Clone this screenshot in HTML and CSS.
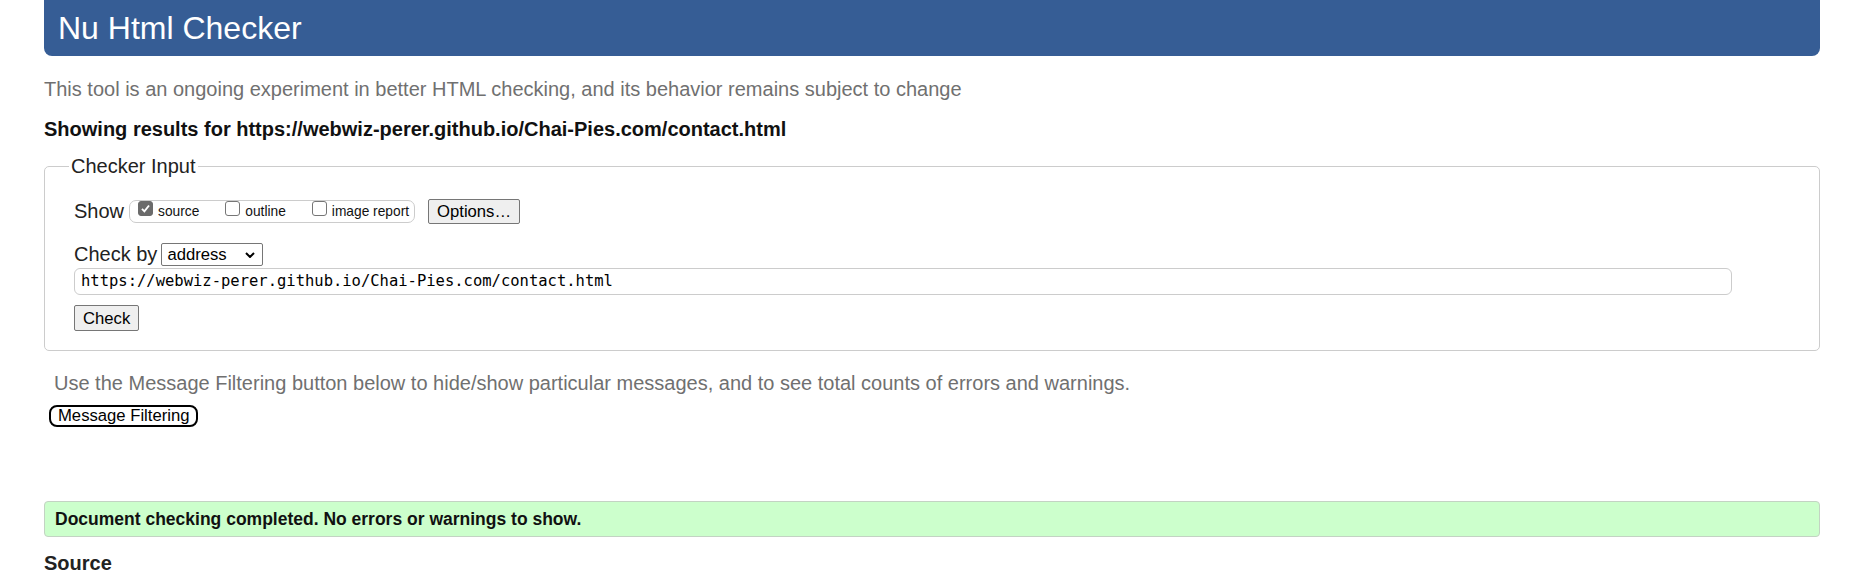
FILE: index.html
```html
<!DOCTYPE html>
<html lang="en">
<head>
<meta charset="utf-8">
<title>Showing results for contact.html - Nu Html Checker</title>
<link rel="stylesheet" href="styles.css">
</head>
<body>
<h1 class="title">Nu Html Checker</h1>
<p class="about">This tool is an ongoing experiment in better HTML checking, and its behavior remains subject to change</p>
<p class="results">Showing results for https://webwiz-perer.github.io/Chai-Pies.com/contact.html</p>
<fieldset class="checker">
  <legend class="legend">Checker Input</legend>
  <div class="fields">
    <div class="row show-row">
      <span class="label">Show</span>
      <span class="options-group">
        <span class="opt"><span class="box checked"><svg viewBox="0 0 14 14" width="14" height="14"><path d="M3.2 7.4 L5.8 10 L10.8 3.8" fill="none" stroke="#fff" stroke-width="2"/></svg></span><span class="opt-label">source</span></span>
        <span class="opt"><span class="box"></span><span class="opt-label">outline</span></span>
        <span class="opt"><span class="box"></span><span class="opt-label">image report</span></span>
      </span>
      <button class="btn options-btn" type="button">Options…</button>
    </div>
    <div class="row checkby-row">
      <span class="label">Check by</span>
      <span class="select">
        <span class="select-text">address</span>
        <svg class="chev" viewBox="0 0 10 6" width="10" height="6"><path d="M1 1 L5 5 L9 1" fill="none" stroke="#000" stroke-width="2"/></svg>
      </span>
    </div>
    <div class="url">https://webwiz-perer.github.io/Chai-Pies.com/contact.html</div>
    <button class="btn check-btn" type="button">Check</button>
  </div>
</fieldset>
<p class="filter-note">Use the Message Filtering button below to hide/show particular messages, and to see total counts of errors and warnings.</p>
<button class="filter-btn" type="button">Message Filtering</button>
<div class="success">Document checking completed. No errors or warnings to show.</div>
<h2 class="source">Source</h2>
</body>
</html>
```
FILE: styles.css
```css
html { background: #fff; }
body {
  margin: 0;
  padding: 0 45px 0 44px;
  font-family: "Liberation Sans", Arial, sans-serif;
  font-size: 20px;
  line-height: 23px;
  color: #000;
}
.title {
  margin: 0;
  height: 56px;
  line-height: 56px;
  padding: 0 14px;
  font-size: 32px;
  font-weight: normal;
  background: #365d95;
  color: #fff;
  border-radius: 0 0 8px 8px;
}
.about {
  margin: 22px 0 0;
  color: #707070;
}
.results {
  margin: 17px 0 0;
  font-weight: bold;
  color: #111;
}
.checker {
  margin: 14px 0 0;
  border: 1px solid #cccccc;
  border-radius: 5px;
  padding: 21px 24px 19px 24px;
}
.legend {
  padding: 0 2px;
  color: #222;
}
.fields {
  padding-left: 5px;
}
.row {
  display: flex;
  align-items: center;
}
.show-row { height: 25px; }
.label { color: #222; }
.options-group {
  display: flex;
  align-items: center;
  height: 21px;
  margin-left: 5px;
  padding: 0 5px 0 8px;
  border: 1px solid #cccccc;
  border-radius: 7px;
}
.opt {
  display: flex;
  align-items: center;
}
.opt + .opt { margin-left: 26px; }
.box {
  width: 13px;
  height: 13px;
  border: 1px solid #767676;
  border-radius: 3px;
  background: #fff;
  margin-bottom: 7px;
  display: flex;
}
.box.checked {
  background: #6b6b6b;
  border-color: #6b6b6b;
}
.box svg { width: 13px; height: 13px; }
.opt-label {
  margin-left: 5px;
  font-size: 13.75px;
  line-height: 16px;
  color: #111;
}
.btn {
  font-family: "Liberation Sans", Arial, sans-serif;
  font-size: 16.67px;
  line-height: 19px;
  color: #000;
  background: #efefef;
  border: 1px solid #767676;
  border-radius: 2px;
  padding: 2px 8px;
  margin: 0;
}
.options-btn {
  margin-left: 13px;
  height: 25px;
  width: 92px;
}
.checkby-row {
  margin-top: 19px;
  height: 23px;
}
.select {
  margin-left: 4px;
  width: 102px;
  height: 23px;
  box-sizing: border-box;
  border: 1px solid #767676;
  border-radius: 2px;
  display: flex;
  align-items: center;
  justify-content: space-between;
  padding: 0 7px 0 5px;
  font-size: 16.67px;
}
.chev { display: block; }
.url {
  margin-top: 2px;
  width: 1658px;
  height: 27px;
  box-sizing: border-box;
  border: 1px solid #cccccc;
  border-radius: 6px;
  padding: 0 6px;
  font-family: "DejaVu Sans Mono", "Liberation Mono", monospace;
  font-size: 15.5px;
  line-height: 25px;
  color: #000;
}
.check-btn {
  display: block;
  margin-top: 10px;
  height: 26px;
  width: 65px;
}
.filter-note {
  margin: 21px 0 0;
  padding-left: 10px;
  color: #707070;
}
.filter-btn {
  display: block;
  margin: 10px 0 0 5px;
  height: 22px;
  padding: 0 7px;
  font-family: "Liberation Sans", Arial, sans-serif;
  font-size: 16.67px;
  line-height: 18px;
  color: #000;
  background: #fff;
  border: 2px solid #000;
  border-radius: 8px;
}
.success {
  margin-top: 74px;
  height: 36px;
  box-sizing: border-box;
  border: 1px solid #c3d3c3;
  border-radius: 4px;
  background: #ccffcc;
  padding: 0 10px;
  font-size: 17.5px;
  font-weight: bold;
  line-height: 34px;
  color: #111;
}
.source {
  margin: 15px 0 0;
  font-size: 20px;
  line-height: 23px;
  font-weight: bold;
  color: #222;
}
```
